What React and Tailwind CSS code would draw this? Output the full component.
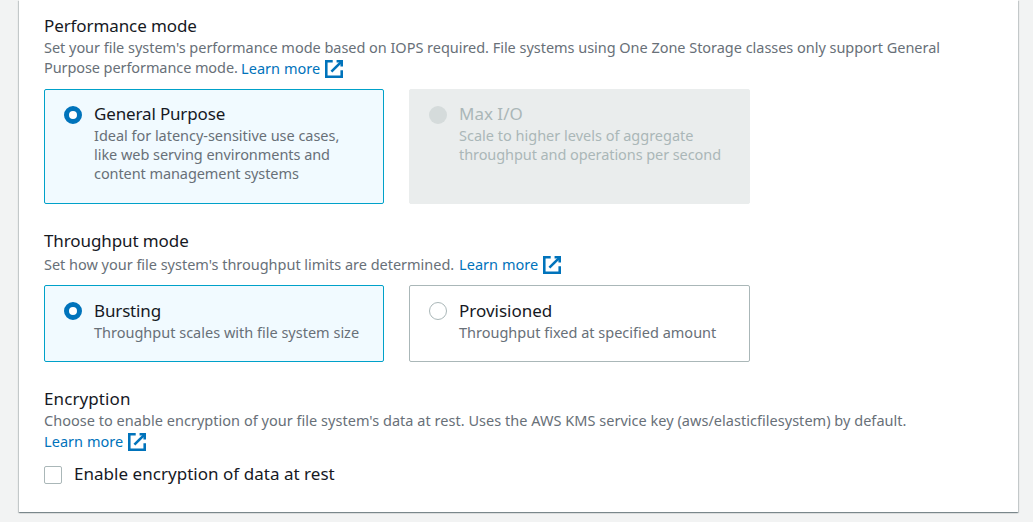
import React from 'react';

function ExternalIcon() {
  return (
    <svg className="ml-[5px] block h-[18px] w-[18px] shrink-0" viewBox="1 1 14 14" fill="none" stroke="#0073bb" strokeWidth="2">
      <path d="M10 2h4v4" />
      <path d="M6 10l8-8" />
      <path d="M14 9.048V14H2V2h5" />
    </svg>
  );
}

function LearnMore() {
  return (
    <a href="#" className="flex h-5 items-center text-[#0073bb]">
      <span className="pb-0.5 tracking-[0.05px]">Learn more</span>
      <ExternalIcon />
    </a>
  );
}

function Radio({ state }) {
  const styles = {
    checked: 'border-[5px] border-[#0073bb] bg-white',
    unchecked: 'border border-[#aab7b8] bg-white',
    disabled: 'bg-[#d5dbdb]',
  };
  return <span className={`mt-1 h-[18px] w-[18px] shrink-0 rounded-full ${styles[state]}`} />;
}

function Tile({ state, width, height, textOffset = '', title, children }) {
  const styles = {
    checked: 'border-[#00a1c9] bg-[#f1faff]',
    unchecked: 'border-[#aab7b8] bg-white',
    disabled: 'border-[#eaeded] bg-[#eaeded]',
  };
  const disabled = state === 'disabled';
  return (
    <label className={`flex items-start gap-3 rounded-[2px] border pt-3 pl-[19px] ${width} ${height} ${styles[state]}`}>
      <Radio state={state} />
      <span className={`block ${textOffset}`}>
        <span className={`block text-[17px] leading-6 ${disabled ? 'text-[#aab7b8]' : 'text-[#16191f]'}`}>{title}</span>
        <span className={`block text-[14.5px] leading-[19px] ${disabled ? 'text-[#aab7b8]' : 'text-[#687078]'}`}>{children}</span>
      </span>
    </label>
  );
}

export default function App() {
  return (
    <div className="h-[522px] overflow-hidden bg-[#f2f3f3] px-[19px] pr-[15px] font-['Noto_Sans',sans-serif] whitespace-nowrap">
      <main className="h-[512px] w-[999px] bg-white pt-3.5 pl-[25px] text-[14.5px] leading-5 text-[#687078] shadow-[0_1px_1px_0_rgba(0,28,36,0.3),1px_1px_1px_0_rgba(0,28,36,0.15),-1px_1px_1px_0_rgba(0,28,36,0.15)]">
        <section>
          <h3 className="text-[17px] leading-6 tracking-[-0.1px] text-[#16191f]">Performance mode</h3>
          <p className="-mt-px tracking-[-0.032px]">
            Set your file system's performance mode based on IOPS required. File systems using One Zone Storage classes only support General
          </p>
          <div className="flex">
            <span className="w-[197px] tracking-[-0.09px]">Purpose performance mode.</span>
            <div className="mt-0.5 -mb-px"><LearnMore /></div>
          </div>
          <div className="mt-[11px] flex gap-[25px]">
            <Tile state="checked" width="w-[340px]" height="h-[115px]" title={<span className="tracking-[-0.15px]">General Purpose</span>}>
              <span className="block tracking-[-0.03px]">Ideal for latency-sensitive use cases,</span>
              <span className="block tracking-[-0.05px]">like web serving environments and</span>
              <span className="block tracking-[-0.08px]">content management systems</span>
            </Tile>
            <Tile state="disabled" width="w-[341px]" height="h-[115px]" title="Max I/O">
              <span className="block">Scale to higher levels of aggregate</span>
              <span className="block tracking-[-0.08px]">throughput and operations per second</span>
            </Tile>
          </div>
        </section>

        <section className="mt-[25px]">
          <h3 className="text-[17px] leading-6 tracking-[-0.1px] text-[#16191f]">Throughput mode</h3>
          <div className="mt-px flex">
            <span className="w-[415px] tracking-[-0.02px]">Set how your file system's throughput limits are determined.</span>
            <div className="mt-px"><LearnMore /></div>
          </div>
          <div className="mt-2.5 flex gap-[25px]">
            <Tile state="checked" width="w-[340px]" height="h-[77px]" textOffset="pt-px" title={<span className="tracking-[-0.15px]">Bursting</span>}>
              Throughput scales with file system size
            </Tile>
            <Tile state="unchecked" width="w-[341px]" height="h-[77px]" textOffset="pt-px" title="Provisioned">
              Throughput fixed at specified amount
            </Tile>
          </div>
        </section>

        <section className="mt-[25px]">
          <h3 className="text-[17px] leading-6 tracking-[0.1px] text-[#16191f]">Encryption</h3>
          <p className="-mt-px tracking-[0.028px]">
            Choose to enable encryption of your file system's data at rest. Uses the AWS KMS service key (aws/elasticfilesystem) by default.
          </p>
          <div className="mt-0.5 flex">
            <LearnMore />
          </div>
          <label className="mt-2.5 flex gap-3">
            <span className="mt-1 h-[18px] w-[18px] rounded-[2px] border border-[#aab7b8] bg-white" />
            <span className="text-[17px] leading-6 tracking-[0.03px] text-[#16191f]">Enable encryption of data at rest</span>
          </label>
        </section>
      </main>
    </div>
  );
}
